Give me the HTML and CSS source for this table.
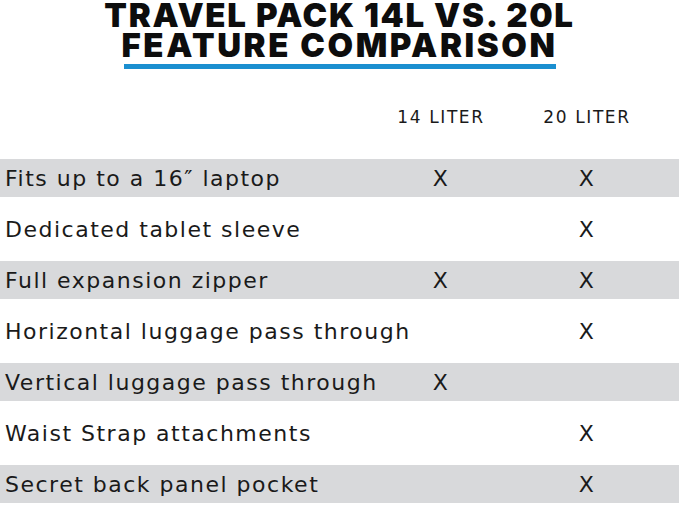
FILE: index.html
```html
<!DOCTYPE html>
<html>
<head>
<meta charset="utf-8">
<link rel="stylesheet" href="styles.css">
</head>
<body>
<div class="page">
  <header class="title">
    <h1><span class="l1">TRAVEL PACK 14L VS. 20L</span><br><span class="l2">FEATURE COMPARISON</span></h1>
    <div class="rule"></div>
  </header>
  <div class="table">
    <div class="row head">
      <div class="label"></div>
      <div class="cell">14 LITER</div>
      <div class="cell">20 LITER</div>
      <div></div>
    </div>
    <div class="row shade">
      <div class="label">Fits up to a 16″ laptop</div>
      <div class="cell">X</div>
      <div class="cell">X</div>
      <div></div>
    </div>
    <div class="row">
      <div class="label">Dedicated tablet sleeve</div>
      <div class="cell"></div>
      <div class="cell">X</div>
      <div></div>
    </div>
    <div class="row shade">
      <div class="label">Full expansion zipper</div>
      <div class="cell">X</div>
      <div class="cell">X</div>
      <div></div>
    </div>
    <div class="row">
      <div class="label">Horizontal luggage pass through</div>
      <div class="cell"></div>
      <div class="cell">X</div>
      <div></div>
    </div>
    <div class="row shade">
      <div class="label">Vertical luggage pass through</div>
      <div class="cell">X</div>
      <div class="cell"></div>
      <div></div>
    </div>
    <div class="row">
      <div class="label">Waist Strap attachments</div>
      <div class="cell"></div>
      <div class="cell">X</div>
      <div></div>
    </div>
    <div class="row shade">
      <div class="label">Secret back panel pocket</div>
      <div class="cell"></div>
      <div class="cell">X</div>
      <div></div>
    </div>
  </div>
</div>
</body>
</html>
```

FILE: styles.css
```css
html, body {
  margin: 0;
  padding: 0;
  background: #ffffff;
}
.page {
  width: 679px;
  height: 505px;
  overflow: hidden;
  font-family: "DejaVu Sans", "Liberation Sans", sans-serif;
  color: #1a1a1a;
}
.title {
  display: flex;
  flex-direction: column;
  align-items: center;
  font-family: "Inter", "Liberation Sans", sans-serif;
}
.title h1 {
  margin: 0;
  font-size: 33px;
  line-height: 30px;
  font-weight: 900;
  text-align: center;
  color: #0d0d0d;
  white-space: nowrap;
}
.l1 {
  letter-spacing: 1.7px;
}
.l2 {
  letter-spacing: 2.6px;
}
.rule {
  margin-top: 4px;
  width: 432px;
  height: 5px;
  background: #1b8fd0;
  margin-left: 1px;
}
.table {
  display: flex;
  flex-direction: column;
  margin-top: 33px;
}
.row {
  display: grid;
  grid-template-columns: 368px 146px 146px 17px;
  height: 38px;
  align-items: center;
  margin-bottom: 13px;
  font-size: 22px;
  font-weight: 400;
  letter-spacing: 1.5px;
}
.row.head {
  height: 30px;
  margin-bottom: 27px;
  font-size: 17px;
  font-weight: 400;
  letter-spacing: 1.6px;
}
.row.shade {
  background: #d8d9db;
}
.label {
  padding-left: 5px;
  white-space: nowrap;
}
.cell {
  text-align: center;
}
```
